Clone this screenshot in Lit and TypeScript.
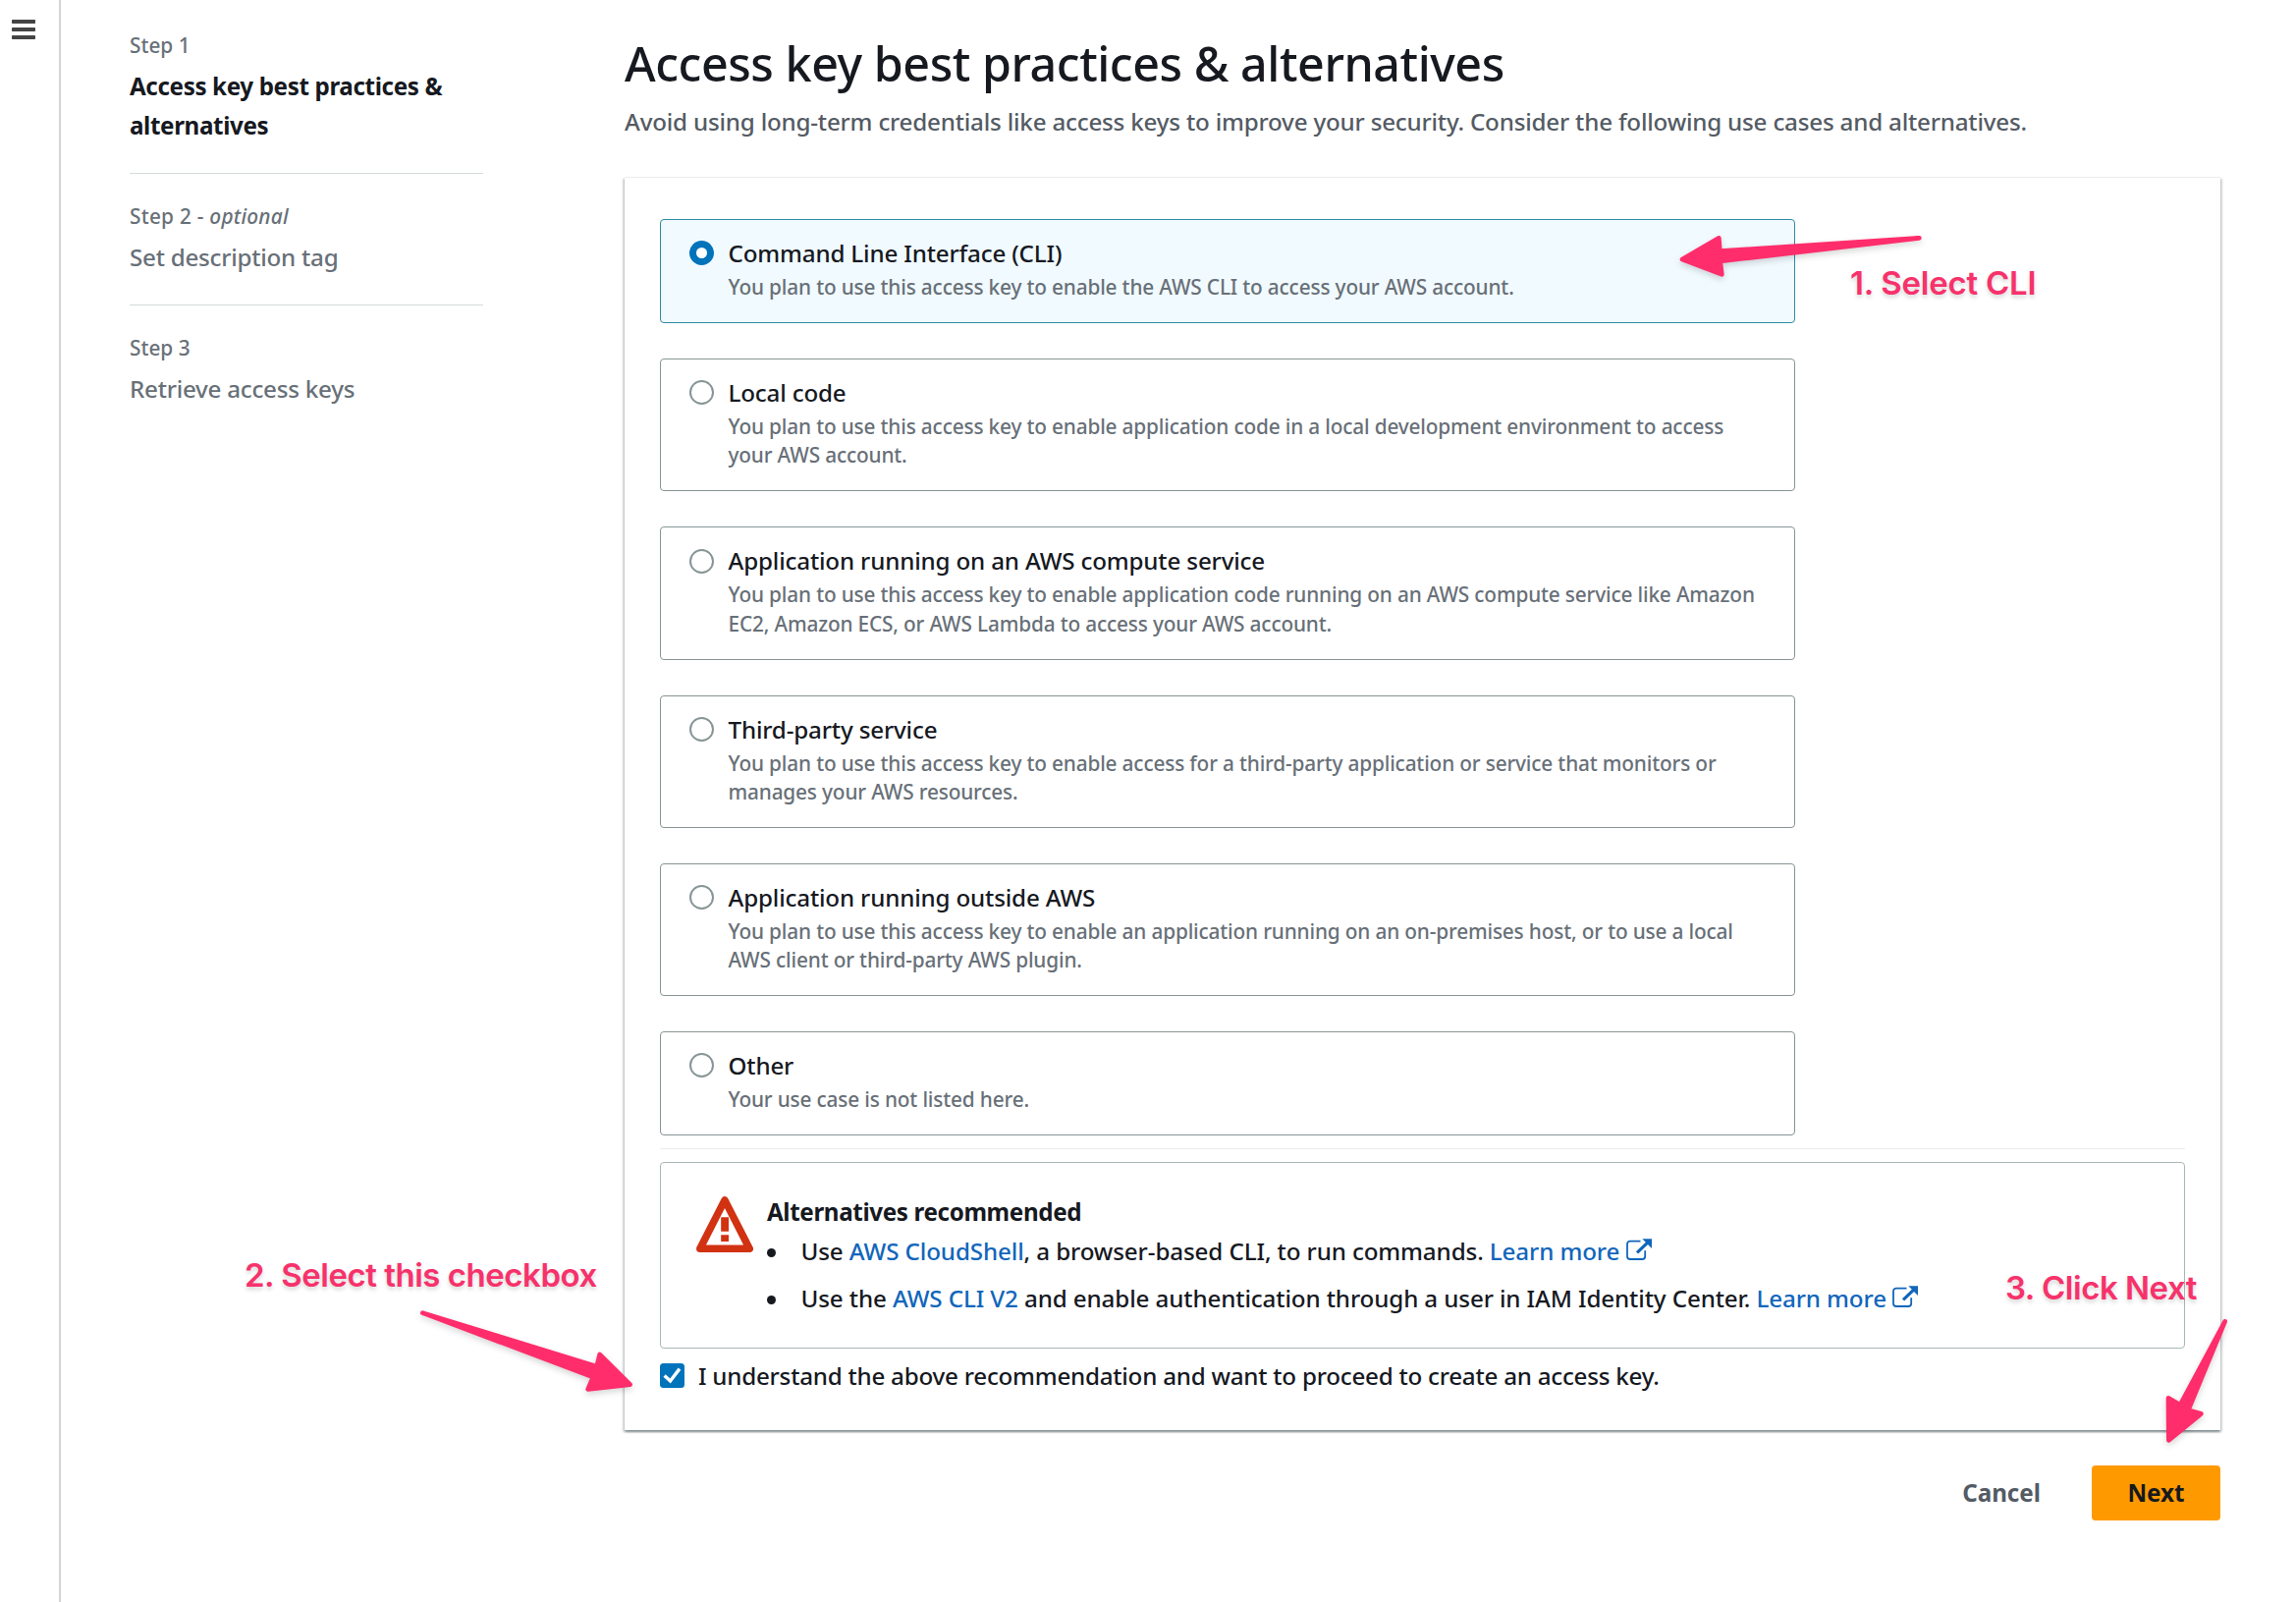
import { LitElement, html, css, svg } from 'lit';
import { customElement, state } from 'lit/decorators.js';
import { classMap } from 'lit/directives/class-map.js';

interface Step {
  label: string;
  optional?: boolean;
  title: string;
}

interface UseCase {
  label: string;
  description: string;
}

interface Arrow {
  transform: string;
  d: string;
}

const STEPS: Step[] = [
  { label: 'Step 1', title: 'Access key best practices & alternatives' },
  { label: 'Step 2', optional: true, title: 'Set description tag' },
  { label: 'Step 3', title: 'Retrieve access keys' },
];

const USE_CASES: UseCase[] = [
  {
    label: 'Command Line Interface (CLI)',
    description: 'You plan to use this access key to enable the AWS CLI to access your AWS account.',
  },
  {
    label: 'Local code',
    description:
      'You plan to use this access key to enable application code in a local development environment to access your AWS account.',
  },
  {
    label: 'Application running on an AWS compute service',
    description:
      'You plan to use this access key to enable application code running on an AWS compute service like Amazon EC2, Amazon ECS, or AWS Lambda to access your AWS account.',
  },
  {
    label: 'Third-party service',
    description:
      'You plan to use this access key to enable access for a third-party application or service that monitors or manages your AWS resources.',
  },
  {
    label: 'Application running outside AWS',
    description:
      'You plan to use this access key to enable an application running on an on-premises host, or to use a local AWS client or third-party AWS plugin.',
  },
  { label: 'Other', description: 'Your use case is not listed here.' },
];

const ARROWS: Arrow[] = [
  {
    transform: 'translate(1690 220) scale(0.33333)',
    d: 'M69 132 181 67 184 107 793 67 185 138 190 178Z',
  },
  {
    transform: 'translate(230 1260) scale(0.33333)',
    d: 'M1235 449 1142 357 1133 394 601 230 1122 426 1106 463Z',
  },
  {
    transform: 'translate(1900 1150) scale(0.33333)',
    d: 'M925 949 924 820 960 841 1097 586 985 857 1024 868Z',
  },
];

@customElement('wizard-steps')
export class WizardSteps extends LitElement {
  static styles = css`
    :host {
      display: block;
      width: 360px;
      color: #687078;
    }
    .step + .step {
      margin-top: 28px;
      padding-top: 26px;
      border-top: 1px solid #d5dbdb;
    }
    .label {
      font-size: 20.8px;
      line-height: 34.5px;
    }
    .optional {
      letter-spacing: 0.25px;
    }
    .title {
      margin-top: 4.5px;
      font-size: 24.2px;
      line-height: 40px;
      letter-spacing: -0.25px;
    }
    .current {
      color: #16191f;
      font-weight: 700;
      letter-spacing: -0.37px;
    }
  `;

  render() {
    return html`${STEPS.map(
      (s, i) => html`<div class="step">
        <div class=${classMap({ label: true, optional: !!s.optional })}>${s.label}${s.optional ? html` - <i>optional</i>` : ''}</div>
        <div class=${classMap({ title: true, current: i === 0 })}>${s.title}</div>
      </div>`,
    )}`;
  }
}

@customElement('use-case-list')
export class UseCaseList extends LitElement {
  static styles = css`
    :host {
      display: flex;
      flex-direction: column;
      gap: 36px;
      width: 1156px;
    }
    .card {
      box-sizing: border-box;
      display: flex;
      gap: 14.5px;
      padding: 16px 28px 20.75px 29px;
      border: 1px solid #879596;
      border-radius: 4px;
      background: #fff;
      cursor: pointer;
    }
    .card.selected {
      border-color: #2e8ca5;
      background: #f1faff;
    }
    .radio {
      box-sizing: border-box;
      flex: none;
      width: 25px;
      height: 25px;
      margin-top: 5.25px;
      border: 2px solid #879596;
      border-radius: 50%;
      background: #fff;
    }
    .selected .radio {
      border: 7px solid #0073bb;
    }
    .label {
      font-size: 24.2px;
      line-height: 36px;
      letter-spacing: -0.17px;
      color: #16191f;
    }
    .description {
      margin-top: 2px;
      font-size: 20.8px;
      line-height: 29.25px;
      letter-spacing: -0.165px;
      color: #687078;
    }
  `;

  @state() private selected = 0;

  render() {
    return html`${USE_CASES.map(
      (u, i) => html`<div
        class=${classMap({ card: true, selected: i === this.selected })}
        @click=${() => (this.selected = i)}
      >
        <span class="radio"></span>
        <div>
          <div class="label">${u.label}</div>
          <div class="description">${u.description}</div>
        </div>
      </div>`,
    )}`;
  }
}

@customElement('alternatives-alert')
export class AlternativesAlert extends LitElement {
  static styles = css`
    :host {
      box-sizing: border-box;
      display: flex;
      gap: 14px;
      height: 190px;
      padding: 30px 36px 0;
      border: 1px solid #aab7b8;
      border-radius: 4px;
      font-size: 24.2px;
      line-height: 40px;
      letter-spacing: -0.12px;
      color: #16191f;
    }
    .warning {
      flex: none;
      width: 58px;
      height: 58px;
      margin-top: 4px;
    }
    .heading {
      font-weight: 700;
      letter-spacing: -0.37px;
    }
    .item {
      display: flex;
      align-items: center;
      height: 40px;
      margin-bottom: 8px;
      white-space: pre;
    }
    .dot {
      width: 9px;
      height: 9px;
      margin: 2px 25.5px 0 0;
      border-radius: 50%;
      background: #16191f;
    }
    .link {
      color: #1166bb;
    }
    .external {
      width: 26px;
      height: 22px;
      margin: 0 0 4px 6.5px;
      color: #1166bb;
    }
  `;

  private external() {
    return html`<svg class="external" viewBox="0 0 26 22" fill="none">
      <path
        d="M14.5 2.6H4a3 3 0 0 0-3 3V18a3 3 0 0 0 3 3h12.2a3 3 0 0 0 3-3v-5.8"
        stroke="currentColor"
        stroke-width="1.8"
      />
      <path d="M11 14.4 22 3.8" stroke="currentColor" stroke-width="3.2" />
      <path d="M16.3.3H26v9.6Z" fill="currentColor" />
    </svg>`;
  }

  render() {
    return html`
      <svg class="warning" viewBox="0 0 58 58" fill="none">
        <path
          d="M29 3.9 54.2 53.3H3.8Z"
          stroke="#d13212"
          stroke-width="7.5"
          stroke-linejoin="round"
        />
        <path d="M25.2 21.3h7.8v14.4h-7.8zM25.2 39.3h7.8V46h-7.8z" fill="#d13212" />
      </svg>
      <div>
        <div class="heading">Alternatives recommended</div>
        <div class="item">
          <span class="dot"></span>
          <span>Use <span class="link">AWS CloudShell</span>, a browser-based CLI, to run commands. <span class="link">Learn more</span></span>
          ${this.external()}
        </div>
        <div class="item">
          <span class="dot"></span>
          <span>Use the <span class="link">AWS CLI V2</span> and enable authentication through a user in IAM Identity Center. <span class="link">Learn more</span></span>
          ${this.external()}
        </div>
      </div>
    `;
  }
}

@customElement('app-root')
export class AppRoot extends LitElement {
  static styles = css`
    :host {
      position: relative;
      display: flex;
      width: 2338px;
      height: 1631px;
      overflow: hidden;
      background: #fff;
      font-family: 'Noto Sans', 'Open Sans', sans-serif;
      font-weight: 500;
      color: #16191f;
    }
    .rail {
      flex: none;
      box-sizing: border-box;
      width: 62px;
      padding: 20px 0 0 12px;
      border-right: 2px solid #d3d6d6;
    }
    .menu {
      display: block;
      width: 24px;
      height: 20px;
    }
    .steps {
      flex: none;
      padding: 29px 144px 0 70px;
    }
    .main {
      width: 1625px;
      padding-top: 34px;
    }
    .page-title {
      margin: 0;
      font-size: 48.4px;
      font-weight: 500;
      line-height: 60px;
      letter-spacing: -0.44px;
      white-space: nowrap;
    }
    .subtitle {
      margin: 12.5px 0 0;
      font-size: 24.2px;
      line-height: 34px;
      letter-spacing: -0.205px;
      color: #545b64;
      white-space: nowrap;
    }
    .panel {
      box-sizing: border-box;
      height: 1276px;
      margin-top: 39.5px;
      padding: 42px 36px 0;
      border-top: 1px solid #eaeded;
      background: #fff;
      box-shadow:
        0 2px 2px 0 rgba(0, 28, 36, 0.3),
        2px 2px 2px 0 rgba(0, 28, 36, 0.15),
        -2px 2px 2px 0 rgba(0, 28, 36, 0.15);
    }
    .rule {
      height: 1px;
      margin: 13px 0;
      background: #eaeded;
    }
    .confirm {
      display: flex;
      align-items: center;
      gap: 14px;
      height: 36px;
      margin-top: 9.5px;
      font-size: 24.2px;
      letter-spacing: -0.24px;
    }
    .checkbox {
      width: 25px;
      height: 25px;
    }
    .actions {
      display: flex;
      justify-content: flex-end;
      align-items: center;
      gap: 52px;
      margin-top: 36px;
      font-size: 24.2px;
      font-weight: 700;
      line-height: 56px;
    }
    .cancel {
      color: #545b64;
    }
    .next {
      width: 131px;
      border-radius: 4px;
      background: #ff9900;
      text-align: center;
    }
    .arrows {
      position: absolute;
      left: 0;
      top: 0;
      width: 2338px;
      height: 1631px;
      pointer-events: none;
      filter: drop-shadow(0 3px 3px rgba(0, 0, 0, 0.16));
    }
    .note {
      position: absolute;
      font: 600 33px/40px Inter, sans-serif;
      letter-spacing: -0.48px;
      color: #f7326b;
      white-space: nowrap;
      text-shadow: 0 3px 4px rgba(0, 0, 0, 0.16);
    }
    .note-select {
      left: 1884px;
      top: 268px;
      letter-spacing: -0.25px;
    }
    .note-check {
      left: 249px;
      top: 1278px;
    }
    .note-next {
      left: 2042px;
      top: 1291px;
    }
  `;

  render() {
    return html`
      <div class="rail">
        <svg class="menu" viewBox="0 0 24 20" fill="#444">
          <rect width="24" height="4" rx="0.8" />
          <rect y="8" width="24" height="4" rx="0.8" />
          <rect y="16" width="24" height="4" rx="0.8" />
        </svg>
      </div>
      <div class="steps"><wizard-steps></wizard-steps></div>
      <div class="main">
        <h1 class="page-title">Access key best practices &amp; alternatives</h1>
        <p class="subtitle">
          Avoid using long-term credentials like access keys to improve your security. Consider the
          following use cases and alternatives.
        </p>
        <div class="panel">
          <use-case-list></use-case-list>
          <div class="rule"></div>
          <alternatives-alert></alternatives-alert>
          <div class="confirm">
            <svg class="checkbox" viewBox="0 0 25 25" fill="none">
              <rect width="25" height="25" rx="3.5" fill="#0073bb" />
              <path d="M4.6 12.6 10.5 18 20 5.6" stroke="#fff" stroke-width="3.4" />
            </svg>
            <span>I understand the above recommendation and want to proceed to create an access key.</span>
          </div>
        </div>
        <div class="actions">
          <span class="cancel">Cancel</span>
          <span class="next">Next</span>
        </div>
      </div>
      <svg class="arrows" viewBox="0 0 2338 1631">
        ${ARROWS.map(
          (a) => svg`<path
            transform=${a.transform}
            d=${a.d}
            fill="#ff2d6b"
            stroke="#ff2d6b"
            stroke-width="14"
            stroke-linejoin="round"
          />`,
        )}
      </svg>
      <div class="note note-select">1. Select CLI</div>
      <div class="note note-check">2. Select this checkbox</div>
      <div class="note note-next">3. Click Next</div>
    `;
  }
}
